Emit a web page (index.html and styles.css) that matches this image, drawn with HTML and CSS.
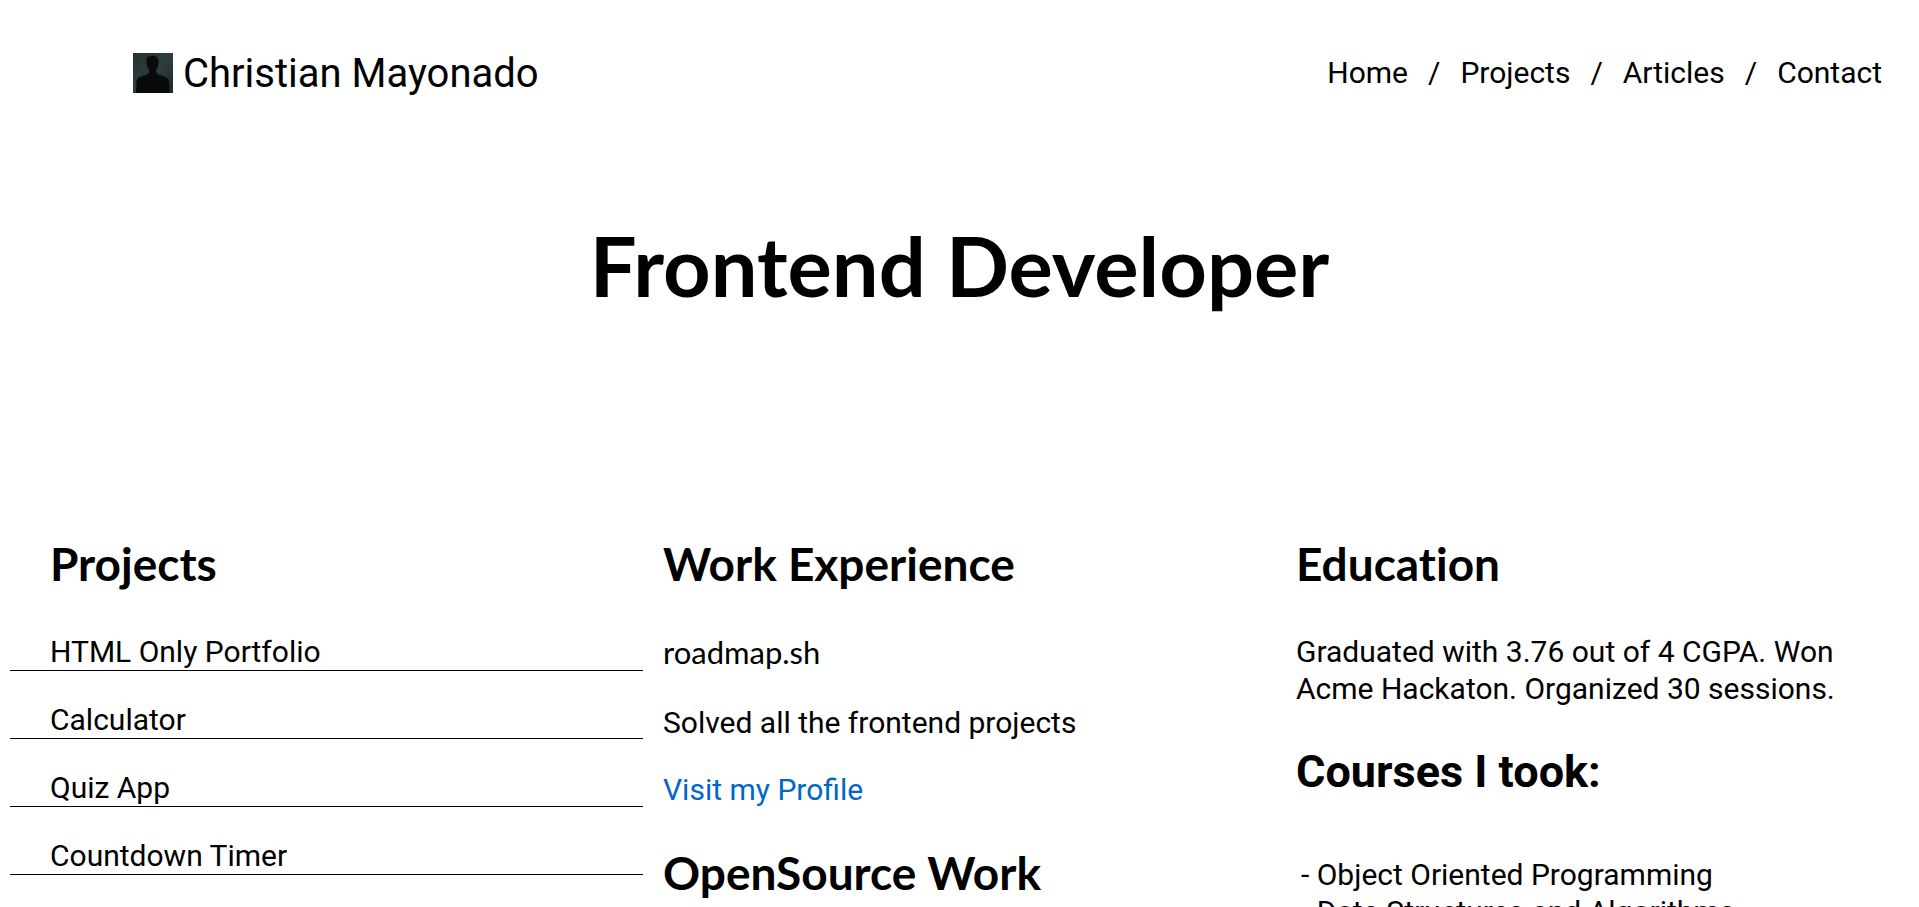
FILE: index.html
```html
<!DOCTYPE html>
<html lang="en">
<head>
<meta charset="utf-8">
<title>Christian Mayonado</title>
<link rel="stylesheet" href="styles.css">
</head>
<body>
<header class="header">
  <div class="brand">
    <svg class="avatar" viewBox="0 0 40 40" role="img" aria-label="Portrait silhouette">
      <defs>
        <linearGradient id="backdrop" x1="0" y1="0" x2="1" y2="1">
          <stop offset="0" stop-color="#233030"/>
          <stop offset="0.5" stop-color="#2d3d3d"/>
          <stop offset="1" stop-color="#1f2a2a"/>
        </linearGradient>
      </defs>
      <rect width="40" height="40" fill="url(#backdrop)"/>
      <path fill="#090a0b" d="M3 40 L3.500 28 Q4 25 7 24 L14 21.500 Q16.500 20.500 16.500 17.500 Q14 15 13.500 10 Q13 4 16 3.500 Q19.500 2 23 3.500 Q26 5 25.500 10 Q25 15 23 17.500 Q23 20.500 25.500 21.500 L32.500 24 Q36 25.500 36 29 L36.500 40 Z"/>
    </svg>
    <span class="name">Christian Mayonado</span>
  </div>
  <nav class="nav">
    <a href="#home">Home</a><span>/</span>
    <a href="#projects">Projects</a><span>/</span>
    <a href="#articles">Articles</a><span>/</span>
    <a href="#contact">Contact</a>
  </nav>
</header>
<main>
  <h1 class="title">Frontend Developer</h1>
  <div class="columns">
    <section class="projects" id="projects">
      <h2 class="heading">Projects</h2>
      <ul class="project-list">
        <li>HTML Only Portfolio</li>
        <li>Calculator</li>
        <li>Quiz App</li>
        <li>Countdown Timer</li>
      </ul>
    </section>
    <section class="column">
      <h2 class="heading">Work Experience</h2>
      <h3 class="employer">roadmap.sh</h3>
      <p class="text">Solved all the frontend projects</p>
      <p class="text"><a class="link" href="#profile">Visit my Profile</a></p>
      <h2 class="heading later-heading">OpenSource Work</h2>
    </section>
    <section class="column">
      <h2 class="heading">Education</h2>
      <p class="text">Graduated with 3.76 out of 4 CGPA. Won Acme Hackaton. Organized 30 sessions.</p>
      <h2 class="heading later-heading courses-heading">Courses I took:</h2>
      <ul class="courses">
        <li>Object Oriented Programming</li>
        <li>Data Structures and Algorithms</li>
      </ul>
    </section>
  </div>
</main>
</body>
</html>
```
FILE: styles.css
```css
* {
  box-sizing: border-box;
  margin: 0;
  padding: 0;
}

body {
  padding: 0 10px;
  background: #fff;
  color: #000;
  font: 30px/37px Roboto, sans-serif;
}

ul {
  list-style: none;
}

a {
  color: inherit;
  text-decoration: none;
}

.header {
  display: flex;
  justify-content: space-between;
  align-items: center;
  padding: 49px 27px 0 123px;
}

.brand {
  display: flex;
  align-items: center;
  gap: 10px;
}

.avatar {
  width: 40px;
  height: 40px;
}

.name {
  padding-top: 2px;
  font-size: 40px;
  line-height: 46px;
}

.nav {
  display: flex;
  gap: 20px;
  padding-bottom: 2px;
}

.title {
  margin-top: 113px;
  font: bold 83px/110px Lato, sans-serif;
  text-align: center;
}

.columns {
  display: grid;
  grid-template-columns: repeat(3, minmax(0, 1fr));
  margin-top: 214px;
}

.heading {
  margin-bottom: 39px;
  font: bold 46px/60px Lato, sans-serif;
  font-variant-ligatures: none;
}

.projects .heading,
.project-list li {
  padding-left: 40px;
}

.project-list li {
  border-bottom: 1px solid #000;
  margin-bottom: 30px;
}

.column {
  padding: 0 20px;
}

.employer {
  margin-bottom: 33px;
  font: 31px/38px Lato, sans-serif;
}

.text {
  margin-bottom: 30px;
}

.link {
  color: #0066cc;
}

.later-heading {
  margin-top: 35px;
}

.courses-heading {
  margin-bottom: 54px;
  font-family: Roboto, sans-serif;
  font-size: 45px;
}

.courses li {
  padding-left: 5px;
}

.courses li::before {
  content: "- ";
}
```
